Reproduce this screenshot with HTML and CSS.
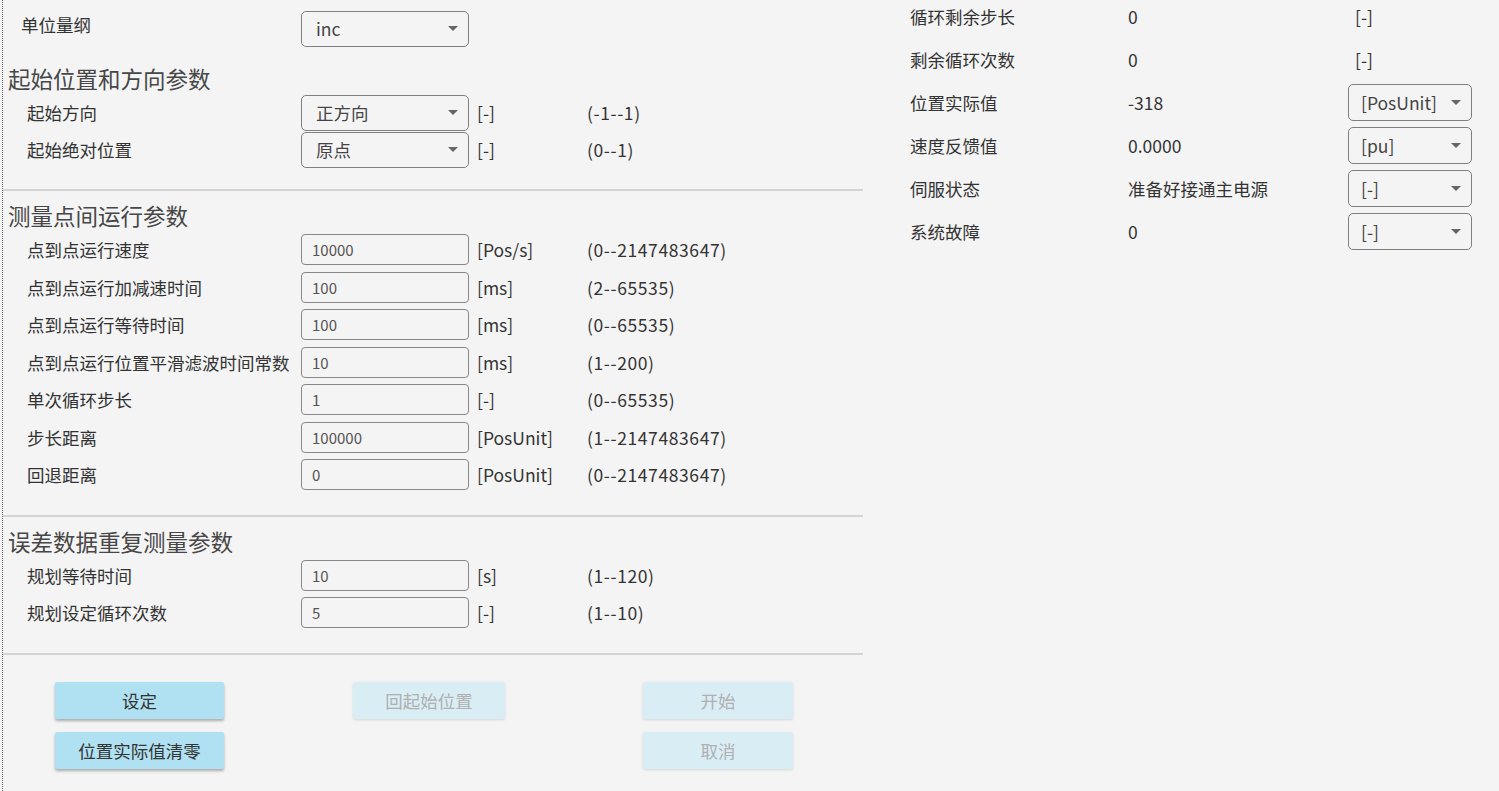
FILE: index.html
```html
<!DOCTYPE html>
<html lang="zh-CN">
<head>
    <meta charset="UTF-8">
    <title>测量点间运行</title>
    <link rel="stylesheet" href="styles.css">
</head>
<body>
<div class="page">
    <div class="left">
        <div class="unit-row">
            <span class="unit-label">单位量纲</span>
            <div class="select"><span>inc</span><svg class="arrow" width="10" height="6" viewBox="0 0 10 6"><path d="M0 0h10L5 5z"/></svg></div>
        </div>

        <div class="section">
            <h2 class="title">起始位置和方向参数</h2>
            <div class="row sel-row">
                <span>起始方向</span>
                <div class="select"><span>正方向</span><svg class="arrow" width="10" height="6" viewBox="0 0 10 6"><path d="M0 0h10L5 5z"/></svg></div>
                <span class="unit">[-]</span>
                <span class="range">(-1--1)</span>
            </div>
            <div class="row sel-row">
                <span>起始绝对位置</span>
                <div class="select"><span>原点</span><svg class="arrow" width="10" height="6" viewBox="0 0 10 6"><path d="M0 0h10L5 5z"/></svg></div>
                <span class="unit">[-]</span>
                <span class="range">(0--1)</span>
            </div>
        </div>

        <div class="section">
            <h2 class="title">测量点间运行参数</h2>
            <div class="row">
                <span>点到点运行速度</span>
                <div class="input">10000</div>
                <span class="unit">[Pos/s]</span>
                <span class="range">(0--2147483647)</span>
            </div>
            <div class="row">
                <span>点到点运行加减速时间</span>
                <div class="input">100</div>
                <span class="unit">[ms]</span>
                <span class="range">(2--65535)</span>
            </div>
            <div class="row">
                <span>点到点运行等待时间</span>
                <div class="input">100</div>
                <span class="unit">[ms]</span>
                <span class="range">(0--65535)</span>
            </div>
            <div class="row">
                <span>点到点运行位置平滑滤波时间常数</span>
                <div class="input">10</div>
                <span class="unit">[ms]</span>
                <span class="range">(1--200)</span>
            </div>
            <div class="row">
                <span>单次循环步长</span>
                <div class="input">1</div>
                <span class="unit">[-]</span>
                <span class="range">(0--65535)</span>
            </div>
            <div class="row">
                <span>步长距离</span>
                <div class="input">100000</div>
                <span class="unit">[PosUnit]</span>
                <span class="range">(1--2147483647)</span>
            </div>
            <div class="row">
                <span>回退距离</span>
                <div class="input">0</div>
                <span class="unit">[PosUnit]</span>
                <span class="range">(0--2147483647)</span>
            </div>
        </div>

        <div class="section">
            <h2 class="title">误差数据重复测量参数</h2>
            <div class="row">
                <span>规划等待时间</span>
                <div class="input">10</div>
                <span class="unit">[s]</span>
                <span class="range">(1--120)</span>
            </div>
            <div class="row">
                <span>规划设定循环次数</span>
                <div class="input">5</div>
                <span class="unit">[-]</span>
                <span class="range">(1--10)</span>
            </div>
        </div>

        <div class="buttons">
            <div class="btn-col col1">
                <button class="btn">设定</button>
                <button class="btn">位置实际值清零</button>
            </div>
            <div class="btn-col col2">
                <button class="btn" disabled>回起始位置</button>
            </div>
            <div class="btn-col col3">
                <button class="btn" disabled>开始</button>
                <button class="btn" disabled>取消</button>
            </div>
        </div>
    </div>

    <div class="right">
        <div class="status">
            <span>循环剩余步长</span>
            <span>0</span>
            <span class="unit-text">[-]</span>
        </div>
        <div class="status">
            <span>剩余循环次数</span>
            <span>0</span>
            <span class="unit-text">[-]</span>
        </div>
        <div class="status">
            <span>位置实际值</span>
            <span>-318</span>
            <div class="select small"><span>[PosUnit]</span><svg class="arrow" width="10" height="6" viewBox="0 0 10 6"><path d="M0 0h10L5 5z"/></svg></div>
        </div>
        <div class="status">
            <span>速度反馈值</span>
            <span>0.0000</span>
            <div class="select small"><span>[pu]</span><svg class="arrow" width="10" height="6" viewBox="0 0 10 6"><path d="M0 0h10L5 5z"/></svg></div>
        </div>
        <div class="status">
            <span>伺服状态</span>
            <span>准备好接通主电源</span>
            <div class="select small"><span>[-]</span><svg class="arrow" width="10" height="6" viewBox="0 0 10 6"><path d="M0 0h10L5 5z"/></svg></div>
        </div>
        <div class="status">
            <span>系统故障</span>
            <span>0</span>
            <div class="select small"><span>[-]</span><svg class="arrow" width="10" height="6" viewBox="0 0 10 6"><path d="M0 0h10L5 5z"/></svg></div>
        </div>
    </div>
</div>
</body>
</html>
```

FILE: styles.css
```css
body {
    margin: 0;
    background-color: #f4f4f4;
    color: #333;
    font-family: "Noto Sans CJK SC", "Noto Sans", sans-serif;
    font-size: 17.5px;
}
.page {
    display: flex;
    min-height: 791px;
}
.left {
    width: 860px;
    margin-left: 2px;
    border-left: 1px dotted #666;
}
.unit-row {
    display: flex;
    align-items: center;
    height: 37px;
    padding: 10px 0 7px 18px;
}
.unit-label {
    width: 280px;
    margin-top: -9px;
}
.section {
    padding: 9px 0 21px;
    border-bottom: 2px solid #d4d4d4;
}
.title {
    margin: 0;
    height: 31px;
    line-height: 31px;
    padding-left: 5px;
    font-size: 22.5px;
    font-weight: normal;
    color: #474747;
}
.row {
    display: grid;
    grid-template-columns: 274px 168px 118px auto;
    align-items: center;
    height: 37.5px;
    padding-left: 24px;
    line-height: 1;
}
.sel-row {
    height: 37px;
}
.unit {
    padding-left: 8px;
}
.range {
    letter-spacing: 0.6px;
}
.select {
    display: flex;
    align-items: center;
    justify-content: space-between;
    box-sizing: border-box;
    width: 168px;
    height: 36px;
    padding: 0 10px 0 14px;
    border: 1px solid #808080;
    border-radius: 5px;
    color: #444;
}
.arrow {
    fill: #666;
}
.input {
    box-sizing: border-box;
    width: 168px;
    height: 31px;
    line-height: 29px;
    padding-left: 10px;
    border: 1px solid #888;
    border-radius: 4px;
    font-size: 15px;
    color: #555;
}
.buttons {
    display: flex;
    padding: 27px 0 0 52px;
}
.btn-col {
    display: flex;
    flex-direction: column;
    gap: 13px;
}
.col1 {
    width: 169px;
    margin-right: 129px;
}
.col2 {
    width: 152px;
    margin-right: 138px;
}
.col3 {
    width: 150px;
}
.btn {
    height: 37px;
    border: none;
    border-radius: 2px;
    background-color: #b0e1f2;
    box-shadow: 0 2px 3px rgba(0, 0, 0, 0.3);
    color: #333;
    font-family: inherit;
    font-size: 17.5px;
}
.btn:disabled {
    background-color: #d9edf5;
    box-shadow: 0 1px 3px rgba(0, 0, 0, 0.12);
    color: #b0b0b0;
}
.right {
    margin-left: 47px;
    margin-top: -5px;
}
.status {
    display: grid;
    grid-template-columns: 218px 220px 124px;
    align-items: center;
    height: 43px;
    line-height: 1;
}
.unit-text {
    padding-left: 7px;
}
.select.small {
    width: 124px;
    height: 37px;
    padding-left: 12px;
}
```
